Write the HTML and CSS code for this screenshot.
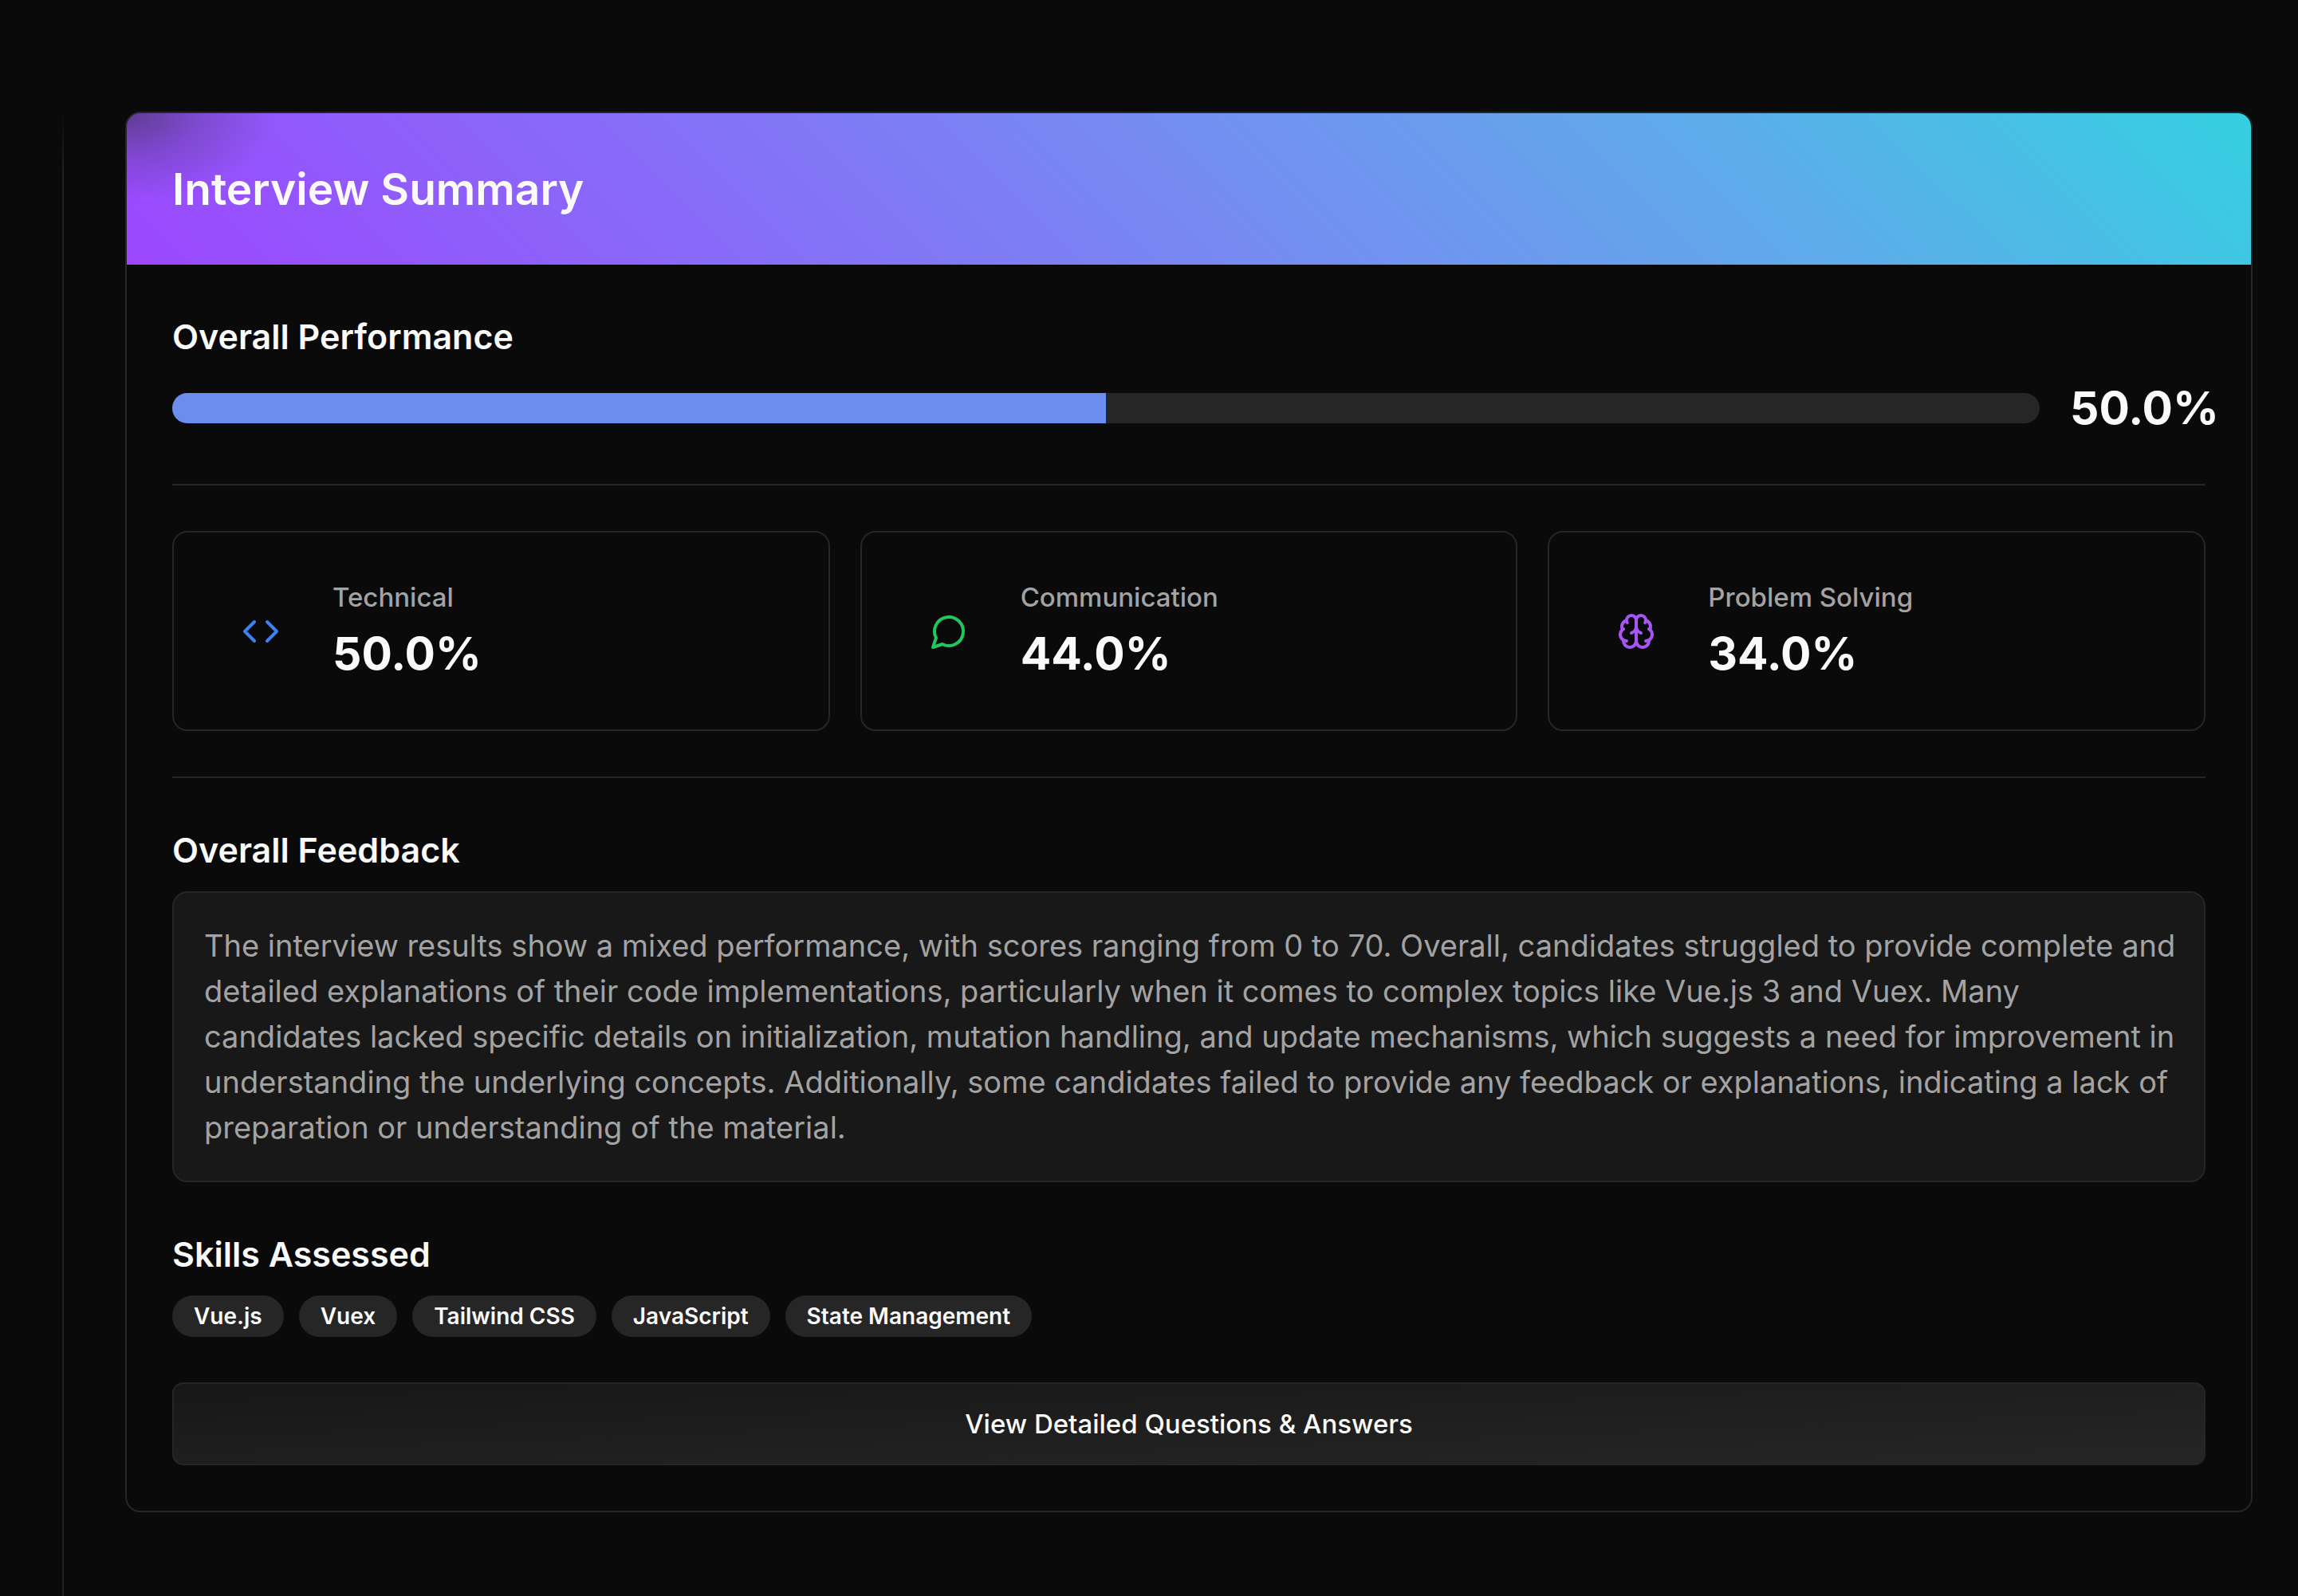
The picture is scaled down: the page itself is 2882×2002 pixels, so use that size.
FILE: index.html
```html
<!DOCTYPE html>
<html lang="en">
<head>
<meta charset="utf-8">
<meta name="viewport" content="width=device-width, initial-scale=1">
<title>Interview Summary</title>
<link rel="stylesheet" href="styles.css">
</head>
<body>
<div class="layout">
  <main class="content">
    <article class="card">
      <header class="card-header">
        <h1 class="card-title">Interview Summary</h1>
      </header>
      <div class="card-body">
        <section class="section">
          <h2 class="section-title" id="performance">Overall Performance</h2>
          <div class="score-row">
            <div class="progress" role="progressbar" aria-labelledby="performance" aria-valuenow="50" aria-valuemin="0" aria-valuemax="100">
              <div class="progress-fill" style="width: 50%"></div>
            </div>
            <span class="score">50.0%</span>
          </div>
        </section>
        <hr class="separator">
        <section class="stats">
          <div class="stat">
            <div class="stat-icon stat-icon-blue">
              <svg class="icon" viewBox="0 0 24 24" aria-hidden="true"><path d="m16 18 6-6-6-6"/><path d="m8 6-6 6 6 6"/></svg>
            </div>
            <div class="stat-text">
              <p class="stat-label">Technical</p>
              <p class="stat-value">50.0%</p>
            </div>
          </div>
          <div class="stat">
            <div class="stat-icon stat-icon-green">
              <svg class="icon" viewBox="0 0 24 24" aria-hidden="true"><path d="M7.9 20A9 9 0 1 0 4 16.1L2 22Z"/></svg>
            </div>
            <div class="stat-text">
              <p class="stat-label">Communication</p>
              <p class="stat-value">44.0%</p>
            </div>
          </div>
          <div class="stat">
            <div class="stat-icon stat-icon-purple">
              <svg class="icon" viewBox="0 0 24 24" aria-hidden="true"><path d="M12 5a3 3 0 1 0-5.997.125 4 4 0 0 0-2.526 5.77 4 4 0 0 0 .556 6.588A4 4 0 1 0 12 18Z"/><path d="M12 5a3 3 0 1 1 5.997.125 4 4 0 0 1 2.526 5.77 4 4 0 0 1-.556 6.588A4 4 0 1 1 12 18Z"/><path d="M15 13a4.5 4.5 0 0 1-3-4 4.5 4.5 0 0 1-3 4"/><path d="M17.599 6.5a3 3 0 0 0 .399-1.375"/><path d="M6.003 5.125A3 3 0 0 0 6.401 6.5"/><path d="M3.477 10.896a4 4 0 0 1 .585-.396"/><path d="M19.938 10.5a4 4 0 0 1 .585.396"/><path d="M6 18a4 4 0 0 1-1.967-.516"/><path d="M19.967 17.484A4 4 0 0 1 18 18"/></svg>
            </div>
            <div class="stat-text">
              <p class="stat-label">Problem Solving</p>
              <p class="stat-value">34.0%</p>
            </div>
          </div>
        </section>
        <hr class="separator">
        <section class="section">
          <h2 class="section-title">Overall Feedback</h2>
          <p class="feedback">The interview results show a mixed performance, with scores ranging from 0 to 70. Overall, candidates struggled to provide complete and detailed explanations of their code implementations, particularly when it comes to complex topics like Vue.js 3 and Vuex. Many candidates lacked specific details on initialization, mutation handling, and update mechanisms, which suggests a need for improvement in understanding the underlying concepts. Additionally, some candidates failed to provide any feedback or explanations, indicating a lack of preparation or understanding of the material.</p>
        </section>
        <section class="section">
          <h2 class="section-title">Skills Assessed</h2>
          <ul class="badges">
            <li class="badge">Vue.js</li>
            <li class="badge">Vuex</li>
            <li class="badge">Tailwind CSS</li>
            <li class="badge">JavaScript</li>
            <li class="badge">State Management</li>
          </ul>
        </section>
        <button class="details-button" type="button">View Detailed Questions &amp; Answers</button>
      </div>
    </article>
  </main>
</div>
</body>
</html>
```
FILE: styles.css
```css
:root {
  --background: #0a0a0a;
  --foreground: #fafafa;
  --muted: #181818;
  --muted-foreground: #a3a3a3;
  --border: #262626;
}

* {
  box-sizing: border-box;
  margin: 0;
}

body {
  min-height: 100vh;
  display: flex;
  flex-direction: column;
  background: var(--background);
  color: var(--foreground);
  font-family: Inter, "Liberation Sans", sans-serif;
  font-size: 38px;
  line-height: 57px;
}

.layout {
  flex: 1;
  display: flex;
  padding: 140px 57px 0 78px;
}

.content {
  flex: 1;
  min-width: 0;
  padding: 0 0 76px 77px;
  border-left: 2px solid;
  border-image: linear-gradient(transparent, #222222 80px) 1;
}

.card {
  border: 2px solid var(--border);
  border-radius: 19px;
  overflow: hidden;
}

.card-header {
  padding: 57px;
  background:
    radial-gradient(ellipse 190px 110px at 0 0, rgba(40, 40, 40, 0.5), rgba(40, 40, 40, 0.2) 50%, rgba(40, 40, 40, 0)),
    linear-gradient(45deg, #9c47ff, #768bf2 50%, #5fabea 75%, #34d0e0);
}

.card-title {
  font-size: 55px;
  font-weight: 600;
  line-height: 76px;
}

.card-body {
  display: flex;
  flex-direction: column;
  gap: 57px;
  padding: 57px;
}

.section {
  display: flex;
  flex-direction: column;
  gap: 19px;
}

.section-title {
  font-size: 43px;
  font-weight: 600;
  line-height: 66px;
}

.score-row {
  display: flex;
  align-items: center;
  gap: 38px;
}

.progress {
  flex: 1;
  height: 38px;
  border-radius: 19px;
  background: var(--border);
  overflow: hidden;
}

.progress-fill {
  height: 100%;
  background: #6b8df0;
}

.score {
  flex: 0 0 170px;
  min-width: 0;
  font-size: 57px;
  font-weight: 700;
  line-height: 76px;
  white-space: nowrap;
}

.separator {
  height: 2px;
  border: 0;
  background: var(--border);
}

.stats {
  display: grid;
  grid-template-columns: repeat(3, 1fr);
  gap: 38px;
}

.stat {
  display: flex;
  align-items: center;
  gap: 38px;
  padding: 57px;
  border: 2px solid var(--border);
  border-radius: 19px;
}

.stat-icon {
  display: flex;
  padding: 28px;
}

.stat-icon-blue { color: #3b82f6; }
.stat-icon-green { color: #22c55e; }
.stat-icon-purple { color: #a855f7; }

.icon {
  width: 48px;
  height: 48px;
  fill: none;
  stroke: currentColor;
  stroke-width: 2;
  stroke-linecap: round;
  stroke-linejoin: round;
}

.stat-text {
  display: flex;
  flex-direction: column;
  gap: 9px;
}

.stat-label {
  color: var(--muted-foreground);
  font-size: 33px;
  font-weight: 500;
  line-height: 48px;
}

.stat-value {
  font-size: 57px;
  font-weight: 700;
  line-height: 76px;
}

.feedback {
  padding: 38px 32px 38px 38px;
  border: 2px solid var(--border);
  border-radius: 19px;
  background: var(--muted);
  color: var(--muted-foreground);
}

.badges {
  display: flex;
  flex-wrap: wrap;
  gap: 19px;
  padding: 0;
  list-style: none;
}

.badge {
  padding: 7px 27px;
  border-radius: 26px;
  background: var(--border);
  font-size: 28px;
  font-weight: 600;
  line-height: 38px;
}

.details-button {
  padding: 26px 38px;
  border: 2px solid var(--border);
  border-radius: 14px;
  background: linear-gradient(to bottom right, #171717, #262626);
  color: var(--foreground);
  font-family: inherit;
  font-size: 33px;
  font-weight: 500;
  line-height: 48px;
  cursor: pointer;
}
```
